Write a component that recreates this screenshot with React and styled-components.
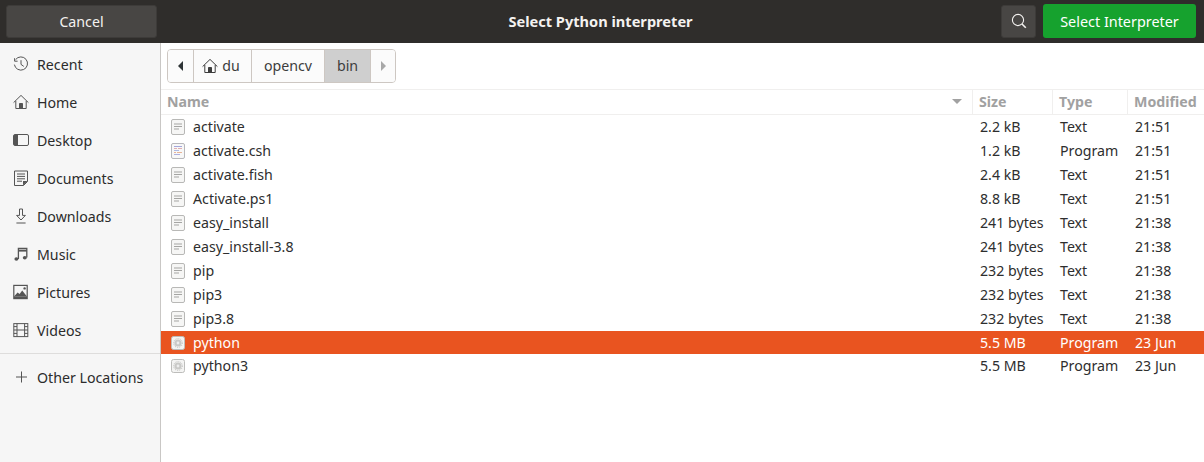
import styled, { createGlobalStyle } from 'styled-components'

const GlobalStyle = createGlobalStyle`
  html, body {
    margin: 0;
    padding: 0;
    background: #ffffff;
  }
  * {
    box-sizing: border-box;
  }
`

const Window = styled.div`
  width: 1204px;
  height: 462px;
  display: flex;
  flex-direction: column;
  overflow: hidden;
  font-family: 'Noto Sans', sans-serif;
  font-size: 14.2px;
  color: #3d3d3d;
`

const HeaderBar = styled.header`
  height: 43px;
  flex: none;
  display: flex;
  align-items: center;
  padding: 0 8px 1px 6px;
  background: #2f2d2b;
  color: #f4f2f0;
`

const Cancel = styled.div`
  width: 151px;
  height: 33px;
  display: flex;
  align-items: center;
  justify-content: center;
  border-radius: 3px;
  background: #484644;
  border: 1px solid #3d3b39;
`

const Title = styled.div`
  flex: 1;
  text-align: center;
  font-weight: 700;
  font-size: 14.6px;
  padding-left: 43px;
`

const SearchButton = styled.div`
  width: 35px;
  height: 33px;
  display: flex;
  align-items: center;
  justify-content: center;
  border-radius: 3px;
  background: #484644;
  border: 1px solid #3d3b39;
  margin-right: 7px;
`

const SelectButton = styled.div`
  width: 153px;
  height: 34px;
  display: flex;
  align-items: center;
  justify-content: center;
  border-radius: 3px;
  background: #16a22e;
  color: #ffffff;
  font-size: 14.4px;
`

const Body = styled.div`
  flex: 1;
  display: flex;
  min-height: 0;
`

const Sidebar = styled.nav`
  width: 161px;
  flex: none;
  padding-top: 2px;
  background: #f6f6f6;
  border-right: 1px solid #c9c7c5;
`

const Place = styled.div`
  height: 38px;
  display: flex;
  align-items: center;
  gap: 8px;
  padding-left: 13px;
  color: #2c2c2c;
`

const PlaceIcon = styled.svg`
  width: 16px;
  height: 16px;
  flex: none;
  color: #555555;
`

const Divider = styled.div`
  height: 1px;
  margin: 4px 0 4px;
  background: #dedddc;
`

const Main = styled.main`
  flex: 1;
  min-width: 0;
  display: flex;
  flex-direction: column;
`

const PathRow = styled.div`
  height: 47px;
  flex: none;
  padding: 6px 0 0 6px;
  border-bottom: 1px solid #f0efee;
`

const PathBar = styled.div`
  display: inline-flex;
  height: 34px;
  border: 1px solid #cdc7c2;
  border-radius: 4px;
  overflow: hidden;
  background: #fbfbfb;
`

const Crumb = styled.div`
  display: flex;
  align-items: center;
  justify-content: center;
  width: ${(p) => p.$width}px;
  padding-bottom: 1px;
  background: ${(p) => (p.$active ? '#cfcfcf' : '#fbfbfb')};
  border-left: ${(p) => (p.$first ? 'none' : '1px solid #cdc7c2')};
`

const HomeCrumb = styled(Crumb)`
  gap: 4px;
  padding-right: 3px;
`

const Arrow = styled.div`
  width: 0;
  height: 0;
  border-top: 5px solid transparent;
  border-bottom: 5px solid transparent;
  ${(p) => (p.$left ? 'border-right: 5px solid #2e3436;' : 'border-left: 5px solid #a8a8a8;')}
`

const ColumnsGrid = styled.div`
  display: grid;
  grid-template-columns: 811px 80px 75px 77px;
`

const TableHead = styled(ColumnsGrid)`
  height: 25px;
  flex: none;
  border-bottom: 1px solid #f0efee;
  color: #a1a1a1;
  font-weight: 700;
`

const HeadCell = styled.div`
  display: flex;
  align-items: center;
  justify-content: space-between;
  padding: 0 8px 2px 6px;
  border-left: ${(p) => (p.$first ? 'none' : '1px solid #f0efee')};
  white-space: nowrap;
`

const SortArrow = styled.div`
  width: 0;
  height: 0;
  border-left: 5px solid transparent;
  border-right: 5px solid transparent;
  border-top: 5px solid #a1a1a1;
  margin-right: 2px;
`

const Row = styled(ColumnsGrid)`
  height: ${(p) => (p.$selected ? '23px' : '24px')};
  padding-bottom: ${(p) => (p.$selected ? '0' : '1px')};
  flex: none;
  align-items: center;
  background: ${(p) => (p.$selected ? '#e95420' : 'transparent')};
  color: ${(p) => (p.$selected ? '#ffffff' : '#2e2e2e')};
`

const NameCell = styled.div`
  display: flex;
  align-items: center;
  gap: 7px;
  padding-left: 9px;
`

const Cell = styled.div`
  padding-left: 8px;
  white-space: nowrap;
`

const FileGlyph = styled.svg`
  width: 16px;
  height: 16px;
  flex: none;
`

const RecentIcon = () => (
  <PlaceIcon viewBox="0 0 16 16" fill="none" stroke="currentColor" strokeWidth="1">
    <path d="M2.6 3.6A6.6 6.6 0 1 1 1.4 8.6" />
    <path d="M1.6 2.2v3h3" />
    <path d="M8 4.2V8.4l2.8 2" />
  </PlaceIcon>
)

const HomeIcon = ({ color }) => (
  <PlaceIcon viewBox="0 0 16 16" fill="none" stroke="currentColor" strokeWidth="1" style={color ? { color } : undefined}>
    <path d="M0.6 8.6L8 1.4l7.4 7.2" />
    <path d="M2.8 7v7.5h10.4V7" />
    <path d="M6.5 14.5V9.5h3v5z" fill="currentColor" />
  </PlaceIcon>
)

const DesktopIcon = () => (
  <PlaceIcon viewBox="0 0 16 16" fill="none" stroke="currentColor" strokeWidth="1">
    <rect x="0.5" y="2.5" width="15" height="11" rx="1.5" />
    <path d="M1 3h4v10H1z" fill="currentColor" stroke="none" />
  </PlaceIcon>
)

const DocumentsIcon = () => (
  <PlaceIcon viewBox="0 0 16 16" fill="none" stroke="currentColor" strokeWidth="1">
    <path d="M1.5 1h13v10.5L10.5 15.5h-9z" />
    <path d="M4 4h8M4 6.4h8M4 8.8h8M4 11.2h5" />
    <path d="M10 15.5v-4.5h4.5z" fill="currentColor" stroke="none" />
  </PlaceIcon>
)

const DownloadsIcon = () => (
  <PlaceIcon viewBox="0 0 16 16" fill="none" stroke="currentColor" strokeWidth="1">
    <path d="M6.5 1v6.4H3.6L8 12l4.4-4.6H9.5V1z" />
    <path d="M3.4 15h9.2" />
  </PlaceIcon>
)

const MusicIcon = () => (
  <PlaceIcon viewBox="0 0 16 16" fill="none" stroke="currentColor" strokeWidth="1.3">
    <path d="M5.4 13V2.4h8.4V11.6" />
    <path d="M5.4 4.6h8.4" strokeWidth="2" />
    <ellipse cx="3.4" cy="13" rx="2" ry="1.7" fill="currentColor" stroke="none" />
    <ellipse cx="11.8" cy="11.8" rx="2" ry="1.7" fill="currentColor" stroke="none" />
  </PlaceIcon>
)

const PicturesIcon = () => (
  <PlaceIcon viewBox="0 0 16 16" fill="none" stroke="currentColor" strokeWidth="1.2">
    <rect x="0.8" y="1.4" width="13.4" height="13.2" />
    <path d="M1 12.4l3.6-4 2 1.6 2.6-3.6 4.8 6z" fill="currentColor" stroke="none" />
    <path d="M1 12.4h13v2.2H1z" fill="currentColor" stroke="none" />
    <circle cx="11.6" cy="4.4" r="1.2" fill="currentColor" stroke="none" />
  </PlaceIcon>
)

const VideosIcon = () => (
  <PlaceIcon viewBox="0 0 16 16" fill="none" stroke="currentColor" strokeWidth="1">
    <rect x="0.8" y="1.6" width="14" height="13" />
    <path d="M4 1.6v13M11.6 1.6v13M4 8h7.6M0.8 4.6H4M0.8 8H4M0.8 11.4H4M11.6 4.6h3.2M11.6 8h3.2M11.6 11.4h3.2" />
  </PlaceIcon>
)

const PlusIcon = () => (
  <PlaceIcon viewBox="0 0 16 16" fill="none" stroke="currentColor" strokeWidth="1">
    <path d="M8.5 2.5v11M3 8h11" />
  </PlaceIcon>
)

const SearchIcon = () => (
  <svg width="16" height="16" viewBox="0 0 16 16" fill="none" stroke="#f4f2f0" strokeWidth="1.1">
    <circle cx="7" cy="7" r="5.6" />
    <path d="M11 11l3.8 3.8" strokeWidth="1.6" />
  </svg>
)

const TextFileIcon = () => (
  <FileGlyph viewBox="0 0 16 16" fill="none">
    <rect x="1.5" y="0.5" width="13" height="15" rx="1.5" fill="#f6f6f5" stroke="#b8b8b6" />
    <path d="M4 5h8M4 7.5h8M4 10h5" stroke="#a5a5a3" />
  </FileGlyph>
)

const ScriptFileIcon = () => (
  <FileGlyph viewBox="0 0 16 16" fill="none">
    <rect x="1.5" y="0.5" width="13" height="15" rx="1.5" fill="#f8f8f8" stroke="#b8b8bc" />
    <path d="M4 3.5h8" stroke="#a5a7dc" />
    <path d="M4 5.5h3M8 5.5h4" stroke="#e0aeb2" />
    <path d="M4 7.5h5" stroke="#aebbe4" />
    <path d="M4 9.5h2M7 9.5h5" stroke="#e8b498" />
    <path d="M4 11.5h6" stroke="#aeb0e0" />
  </FileGlyph>
)

const BinaryFileIcon = () => (
  <FileGlyph viewBox="0 0 16 16" fill="none">
    <rect x="1.5" y="1.5" width="13" height="13" rx="2" fill="#f4f4f3" stroke="#bdbdbb" />
    <circle cx="8" cy="8" r="3.6" fill="#c9c9c7" />
    <circle cx="8" cy="8" r="1.4" fill="#eeeeee" />
    <circle cx="8" cy="8" r="4.4" stroke="#bcbcba" strokeDasharray="1 1.2" />
  </FileGlyph>
)

const places = [
  ['Recent', RecentIcon],
  ['Home', HomeIcon],
  ['Desktop', DesktopIcon],
  ['Documents', DocumentsIcon],
  ['Downloads', DownloadsIcon],
  ['Music', MusicIcon],
  ['Pictures', PicturesIcon],
  ['Videos', VideosIcon],
]

const files = [
  ['activate', '2.2 kB', 'Text', '21:51', TextFileIcon],
  ['activate.csh', '1.2 kB', 'Program', '21:51', ScriptFileIcon],
  ['activate.fish', '2.4 kB', 'Text', '21:51', TextFileIcon],
  ['Activate.ps1', '8.8 kB', 'Text', '21:51', TextFileIcon],
  ['easy_install', '241 bytes', 'Text', '21:38', TextFileIcon],
  ['easy_install-3.8', '241 bytes', 'Text', '21:38', TextFileIcon],
  ['pip', '232 bytes', 'Text', '21:38', TextFileIcon],
  ['pip3', '232 bytes', 'Text', '21:38', TextFileIcon],
  ['pip3.8', '232 bytes', 'Text', '21:38', TextFileIcon],
  ['python', '5.5 MB', 'Program', '23 Jun', BinaryFileIcon],
  ['python3', '5.5 MB', 'Program', '23 Jun', BinaryFileIcon],
]

const App = () => (
  <Window>
    <GlobalStyle />
    <HeaderBar>
      <Cancel>Cancel</Cancel>
      <Title>Select Python interpreter</Title>
      <SearchButton>
        <SearchIcon />
      </SearchButton>
      <SelectButton>Select Interpreter</SelectButton>
    </HeaderBar>
    <Body>
      <Sidebar>
        {places.map(([label, Icon]) => (
          <Place key={label}>
            <Icon />
            {label}
          </Place>
        ))}
        <Divider />
        <Place>
          <PlusIcon />
          Other Locations
        </Place>
      </Sidebar>
      <Main>
        <PathRow>
          <PathBar>
            <Crumb $first $width={25}>
              <Arrow $left />
            </Crumb>
            <HomeCrumb $width={58}>
              <HomeIcon color="#3d3d3d" />
              du
            </HomeCrumb>
            <Crumb $width={73}>opencv</Crumb>
            <Crumb $width={46} $active>
              bin
            </Crumb>
            <Crumb $width={25}>
              <Arrow />
            </Crumb>
          </PathBar>
        </PathRow>
        <TableHead>
          <HeadCell $first>
            Name
            <SortArrow />
          </HeadCell>
          <HeadCell>Size</HeadCell>
          <HeadCell>Type</HeadCell>
          <HeadCell>Modified</HeadCell>
        </TableHead>
        {files.map(([name, size, type, modified, Icon]) => (
          <Row key={name} $selected={name === 'python'}>
            <NameCell>
              <Icon />
              <span>{name}</span>
            </NameCell>
            <Cell>{size}</Cell>
            <Cell>{type}</Cell>
            <Cell>{modified}</Cell>
          </Row>
        ))}
      </Main>
    </Body>
  </Window>
)

export default App
